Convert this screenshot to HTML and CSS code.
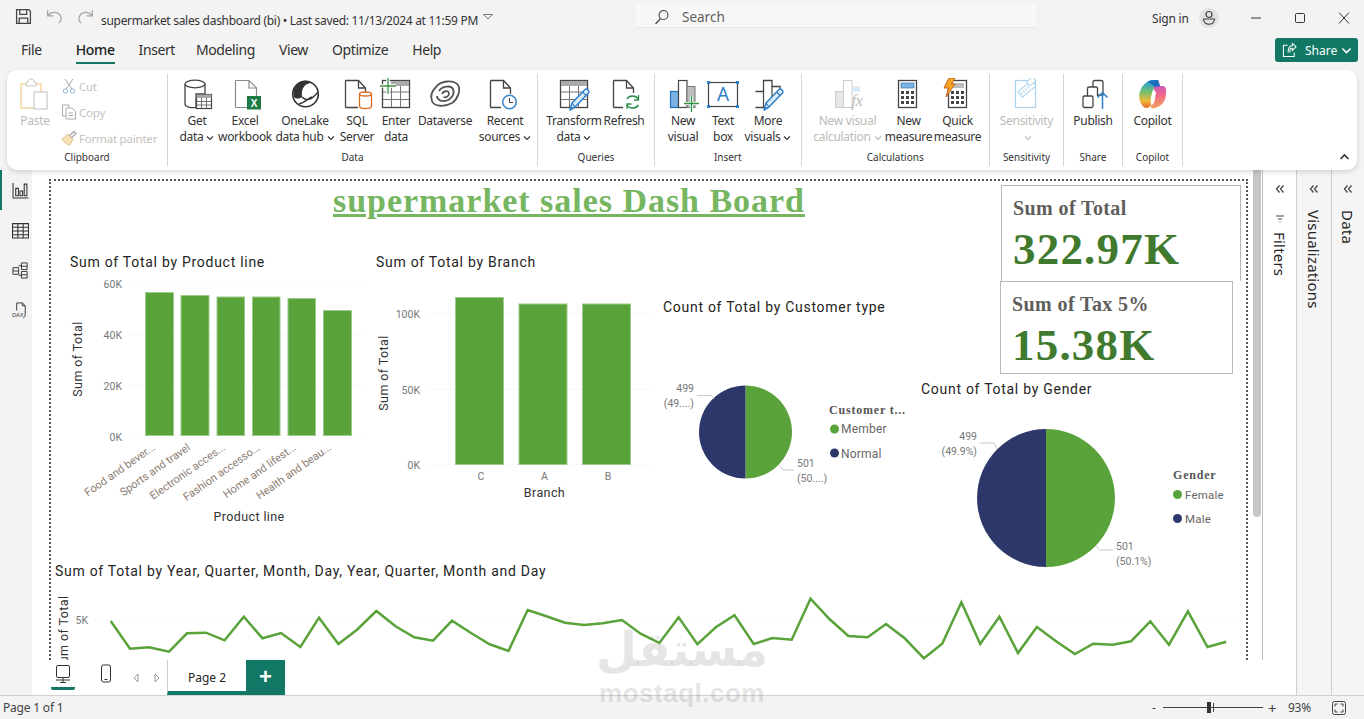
FILE: index.html
```html
<!DOCTYPE html>
<html lang="en">
<head>
    <meta charset="UTF-8">
    <title>supermarket sales dashboard (bi)</title>
    <link rel="stylesheet" href="styles.css">
</head>
<body>
<svg class="sprite" aria-hidden="true">
    <symbol id="chev" viewBox="0 0 8 8"><path d="M1 2.5 4 5.5 7 2.5" fill="none" stroke="currentColor" stroke-width="1.1"/></symbol>
    <symbol id="dbl" viewBox="0 0 10 10"><path d="M4.5 1.5 1.5 5 4.5 8.5M8.5 1.5 5.5 5 8.5 8.5" fill="none" stroke="currentColor" stroke-width="1.3"/></symbol>
    <symbol id="pencil" viewBox="0 0 24 24"><path d="M3 23 5 16 18 2.5C20 1 23 4 21.5 6L8 20Z" fill="#dcebf8" stroke="#2f80c8" stroke-width="1.5" stroke-linejoin="round"/><path d="M15.500 5 19 8.500M5 16 8 20" fill="none" stroke="#2f80c8" stroke-width="1.2"/><path d="M3 23 4 19.500 6.500 21.800Z" fill="#2f80c8"/></symbol>
    <linearGradient id="cp1" x1="0" y1="0" x2="0" y2="1"><stop offset="0" stop-color="#1b9de2"/><stop offset=".45" stop-color="#7cc06a"/><stop offset=".75" stop-color="#f0b93a"/><stop offset="1" stop-color="#e8642c"/></linearGradient>
    <linearGradient id="cp2" x1="0" y1="0" x2="0" y2="1"><stop offset="0" stop-color="#b04fd0"/><stop offset=".5" stop-color="#f0668f"/><stop offset="1" stop-color="#f5a25a"/></linearGradient>
</svg>

<header class="titlebar">
    <svg class="tb-ico" viewBox="0 0 16 16"><path d="M1.500 1.500H13L14.500 3V14.500H1.500ZM4.500 1.500V6H11V1.500M4 14.500V9.500H12V14.500" fill="none" stroke="#444" stroke-width="1.200"/></svg>
    <svg class="tb-ico" viewBox="0 0 16 16"><path d="M1.500 2V7.500H7M2 7C5 3 12 3 14 8.500 14.500 10.500 13.500 13 12 14" fill="none" stroke="#a6a6a6" stroke-width="1.200"/></svg>
    <svg class="tb-ico" viewBox="0 0 16 16"><path d="M14.500 2V7.500H9M14 7C11 3 4 3 2 8.500 1.500 10.500 2.500 13 4 14" fill="none" stroke="#a6a6a6" stroke-width="1.200"/></svg>
    <div class="doc-title">
        <span>supermarket sales dashboard (bi) • Last saved: 11/13/2024 at 11:59 PM</span>
        <svg class="caret" viewBox="0 0 10 6"><path d="M.5.500H9.500L5 5Z" fill="none" stroke="#777"/></svg>
    </div>
    <div class="search">
        <svg viewBox="0 0 16 16" class="search-ico"><circle cx="9.500" cy="6" r="4.500" fill="none" stroke="#444" stroke-width="1.100"/><path d="M6.500 9.500 1.500 15" stroke="#444" stroke-width="1.200"/></svg>
        <span>Search</span>
    </div>
    <div class="signin">Sign in</div>
    <div class="avatar"><svg viewBox="0 0 20 20"><circle cx="10" cy="10" r="10" fill="#e1e1e1"/><circle cx="10" cy="6.500" r="3" fill="none" stroke="#444" stroke-width="1.200"/><path d="M4.500 11H15.500C15.500 18 4.500 18 4.500 11Z" fill="none" stroke="#444" stroke-width="1.200"/></svg></div>
    <div class="winctrl">
        <svg viewBox="0 0 12 12"><path d="M1 6H11" stroke="#333"/></svg>
        <svg viewBox="0 0 12 12"><rect x="1.500" y="1.500" width="9" height="9" rx="1" fill="none" stroke="#333"/></svg>
        <svg viewBox="0 0 12 12"><path d="M1 .5 11 11.500M11 .5 1 11.500" stroke="#333"/></svg>
    </div>
</header>

<nav class="tabs">
    <a class="tab">File</a>
    <a class="tab first active">Home</a>
    <a class="tab short">Insert</a>
    <a class="tab">Modeling</a>
    <a class="tab">View</a>
    <a class="tab">Optimize</a>
    <a class="tab">Help</a>
    <button class="share">
        <svg viewBox="0 0 16 16"><path d="M6 2.500H1.500V14.500H13V10M8.500 10V7.500C8.500 6 10 5.500 11 5.500V8L15 4 11 .5V3C8 3 6.500 5.500 6.500 10" fill="none" stroke="#fff" stroke-width="1.100"/></svg>
        Share
        <svg class="share-chev"><use href="#chev"/></svg>
    </button>
</nav>

<section class="ribbon">
    <div class="rgroup g-clip">
        <div class="clip-row">
            <div class="rbtn off paste">
                <svg viewBox="0 0 34 34"><path d="M10 6H3V30H19" fill="#fff" stroke="#f3d6a4" stroke-width="1.500"/><path d="M16 6H23V14" fill="none" stroke="#f3d6a4" stroke-width="1.500"/><path d="M8 8V4H10C10 0 16 0 16 4H18V8Z" fill="#fff" stroke="#c8c6c4"/><rect x="16" y="14" width="13" height="17" fill="#fff" stroke="#bdbdbd"/></svg>
                <span>Paste</span>
            </div>
            <div class="small-list">
                <div class="sbtn"><svg viewBox="0 0 16 16"><path d="M4 1 11 11M12 1 5 11" stroke="#a9a9a9" fill="none"/><circle cx="4.500" cy="13" r="2.200" fill="none" stroke="#8fb9dc"/><circle cx="11.500" cy="13" r="2.200" fill="none" stroke="#8fb9dc"/></svg>Cut</div>
                <div class="sbtn"><svg viewBox="0 0 16 16"><path d="M8 3.500V1H1.500V12H5" fill="none" stroke="#a9a9a9"/><path d="M5 4H11L14.500 7.500V15H5ZM7.500 9H12M7.500 11.500H12" fill="#fff" stroke="#a9a9a9"/></svg>Copy</div>
                <div class="sbtn"><svg viewBox="0 0 16 16"><path d="M1 9 7 4 12 9 9 15C6 15 3 12 1 9Z" fill="#f6e0b4" stroke="#dcc48f"/><path d="M8 6 13 1.500 15 3.500 10 8" fill="none" stroke="#a9a9a9" stroke-width="1.300"/></svg>Format painter</div>
            </div>
        </div>
        <div class="glabel">Clipboard</div>
    </div>

    <div class="rgroup g-data">
        <div class="row-data">
            <div class="rbtn">
                <svg viewBox="0 0 34 34"><path d="M5 6V26C5 29 11 30 16 29.500V16H25V6" fill="#fff" stroke="#444" stroke-width="1.300"/><ellipse cx="15" cy="6" rx="10" ry="3.800" fill="#fff" stroke="#444" stroke-width="1.300"/><rect x="16.500" y="16.500" width="15" height="14" fill="#fff" stroke="#444" stroke-width="1.200"/><path d="M16.500 16.500H31.500V20H16.500Z" fill="#a6a6a6"/><path d="M21.500 20V30.500M26.500 20V30.500M16.500 23.500H31.500M16.500 27H31.500" stroke="#666" stroke-width=".9"/></svg>
                <span>Get</span><span>data <svg class="chev"><use href="#chev"/></svg></span>
            </div>
            <div class="rbtn">
                <svg viewBox="0 0 34 34"><path d="M7.500 2.500H21L28.500 10V18M19 29.500H7.500Z" fill="#fff" stroke="#8a8a8a" stroke-width="1.200"/><path d="M7.500 2.500V29.500M21 2.500V10H28.500" fill="none" stroke="#8a8a8a" stroke-width="1.200"/><rect x="19" y="18" width="14" height="13.500" fill="#1f7b45"/><text x="26" y="29" class="xl">X</text></svg>
                <span>Excel</span><span>workbook</span>
            </div>
            <div class="rbtn">
                <svg viewBox="0 0 34 34"><circle cx="17.500" cy="16" r="12.800" fill="#fff" stroke="#333" stroke-width="1.600"/><path d="M7 9C11 2 20 1 24 5 17 5 13 10 14 19 11 21 8 21 6 19 5 15 5 12 7 9Z" fill="#333"/><path d="M14 19C18 23 23 23 30 14M11 26C17 25 20 20 24 19" fill="none" stroke="#333" stroke-width="1.300"/></svg>
                <span>OneLake</span><span>data hub <svg class="chev"><use href="#chev"/></svg></span>
            </div>
            <div class="rbtn">
                <svg viewBox="0 0 34 34"><path d="M5.500 2.500H18.500L25.500 10V14M18 29.500H5.500Z" fill="#fff" stroke="#444" stroke-width="1.300"/><path d="M5.500 2.500V29.500M18.500 2.500V10H25.500" fill="none" stroke="#444" stroke-width="1.300"/><path d="M19.500 16V28C19.500 31.500 31.500 31.500 31.500 28V16" fill="#fff" stroke="#dc6d1d" stroke-width="1.300"/><ellipse cx="25.500" cy="16" rx="6" ry="2" fill="#fff" stroke="#dc6d1d" stroke-width="1.300"/></svg>
                <span>SQL</span><span>Server</span>
            </div>
            <div class="rbtn">
                <svg viewBox="0 0 34 34"><rect x="3.500" y="2.500" width="27" height="27" fill="#fff" stroke="#444" stroke-width="1.300"/><rect x="12" y="3" width="18" height="5" fill="#aaa"/><path d="M12.500 8V29M21.500 8V29M4 14H30M4 21.500H30" stroke="#777"/><path d="M9 0V16M1 8H17" stroke="#fff" stroke-width="3.500"/><path d="M9 0V16M1 8H17" stroke="#3f9143" stroke-width="1.300"/></svg>
                <span>Enter</span><span>data</span>
            </div>
            <div class="rbtn">
                <svg viewBox="0 0 34 34"><g fill="none" stroke="#555" stroke-width="1.800"><path d="M8 9C13 2 26 2 30 7 33 12 30 21 24 25 17 29 6 29 4 23 2 18 4 13 8 9Z"/><path d="M11 13C14 8 23 7 25 11 27 15 24 21 19 22.500 14 24 9 22 9 18"/><path d="M14 16C15 13 20 12 21 15 21.500 18 18 20 15.500 19"/></g></svg>
                <span>Dataverse</span>
            </div>
            <div class="rbtn">
                <svg viewBox="0 0 34 34"><path d="M2.500 2.500H15.500L22.500 10V16M13 29.500H2.500Z" fill="#fff" stroke="#444" stroke-width="1.300"/><path d="M2.500 2.500V29.500M15.500 2.500V10H22.500" fill="none" stroke="#444" stroke-width="1.300"/><circle cx="21.500" cy="24" r="6.800" fill="#fff" stroke="#3c87c9" stroke-width="1.500"/><path d="M21.500 20V24.500H25" fill="none" stroke="#444"/></svg>
                <span>Recent</span><span>sources <svg class="chev"><use href="#chev"/></svg></span>
            </div>
        </div>
        <div class="glabel">Data</div>
    </div>

    <div class="rgroup g-queries">
        <div class="row-queries">
            <div class="rbtn">
                <svg viewBox="0 0 34 34"><rect x="3.500" y="2.500" width="27" height="27" fill="#fff" stroke="#444" stroke-width="1.300"/><rect x="4" y="3" width="26" height="5" fill="#aaa"/><path d="M12.500 8V29M21.500 8V29M4 14H30M4 21.500H30" stroke="#777"/><use href="#pencil" x="10" y="9" width="24" height="24"/></svg>
                <span>Transform</span><span>data <svg class="chev"><use href="#chev"/></svg></span>
            </div>
            <div class="rbtn">
                <svg viewBox="0 0 34 34"><path d="M6.500 2.500H19.500L26.500 10V15M16 29.500H6.500Z" fill="#fff" stroke="#444" stroke-width="1.300"/><path d="M6.500 2.500V29.500M19.500 2.500V10H26.500" fill="none" stroke="#444" stroke-width="1.300"/><path d="M20 21C22 17 29 17 31.500 21M31.500 27C29 31 22 31 20 27" fill="none" stroke="#2f8f4e" stroke-width="1.600"/><path d="M31.500 17V22H27M20 31V26H24.500" fill="none" stroke="#2f8f4e" stroke-width="1.300"/></svg>
                <span>Refresh</span>
            </div>
        </div>
        <div class="glabel">Queries</div>
    </div>

    <div class="rgroup g-insert">
        <div class="row-insert">
            <div class="rbtn">
                <svg viewBox="0 0 34 34"><rect x="4.500" y="13.500" width="8" height="16" fill="#7ab3e4" stroke="#2272b9" stroke-width="1.200"/><rect x="12.500" y="2.500" width="8.500" height="27" fill="#fff" stroke="#444" stroke-width="1.200"/><rect x="21" y="8.500" width="8" height="21" fill="#bdbdbd" stroke="#777"/><path d="M25.500 18V34M18 25.500H33" stroke="#fff" stroke-width="3"/><path d="M25.500 18V34M18 25.500H33" stroke="#2d9441" stroke-width="1.300"/></svg>
                <span>New</span><span>visual</span>
            </div>
            <div class="rbtn">
                <svg viewBox="0 0 34 34"><rect x="2.500" y="4.500" width="29" height="24" fill="#fff" stroke="#444" stroke-width="1.200"/><g fill="#2f80c8"><rect x="1" y="3" width="3" height="3"/><rect x="30" y="3" width="3" height="3"/><rect x="1" y="27" width="3" height="3"/><rect x="30" y="27" width="3" height="3"/></g><text x="17" y="23" class="ta">A</text></svg>
                <span>Text</span><span>box</span>
            </div>
            <div class="rbtn">
                <svg viewBox="0 0 34 34"><path d="M4.500 13.500H12.500V2.500H21V8.500H29V18M16 29.500H4.500Z" fill="#fff" stroke="#444" stroke-width="1.300"/><path d="M12.500 13.500V29M21 8.500V20" stroke="#444" stroke-width="1.200"/><use href="#pencil" x="10" y="9" width="24" height="24"/></svg>
                <span>More</span><span>visuals <svg class="chev"><use href="#chev"/></svg></span>
            </div>
        </div>
        <div class="glabel">Insert</div>
    </div>

    <div class="rgroup g-calc">
        <div class="row-calc">
            <div class="rbtn off">
                <svg viewBox="0 0 34 34"><rect x="4.500" y="13.500" width="8" height="16" fill="#e6e6e6" stroke="#ccc"/><rect x="12.500" y="2.500" width="8.500" height="27" fill="#fff" stroke="#ccc"/><rect x="21" y="8.500" width="8" height="5" fill="#d6e6f5"/><text x="26" y="28" class="fx">fx</text></svg>
                <span>New visual</span><span>calculation <svg class="chev"><use href="#chev"/></svg></span>
            </div>
            <div class="rbtn">
                <svg viewBox="0 0 34 34"><rect x="6.500" y="2.500" width="18" height="27" fill="#fff" stroke="#444" stroke-width="1.300"/><rect x="9" y="5" width="13" height="5" fill="#7ab3e4" stroke="#3a78b0" stroke-width=".7"/><g fill="#444"><path d="M9 13h3v3H9zM14 13h3v3h-3zM19 13h3v3h-3zM9 18h3v3H9zM14 18h3v3h-3zM19 18h3v3h-3zM9 23h3v3H9zM14 23h3v3h-3zM19 23h3v3h-3z"/></g></svg>
                <span>New</span><span>measure</span>
            </div>
            <div class="rbtn">
                <svg viewBox="0 0 34 34"><rect x="7.500" y="2.500" width="18" height="27" fill="#fff" stroke="#444" stroke-width="1.300"/><rect x="10" y="5" width="13" height="5" fill="#bbb"/><g fill="#444"><path d="M10 13h3v3h-3zM15 13h3v3h-3zM20 13h3v3h-3zM10 18h3v3h-3zM15 18h3v3h-3zM20 18h3v3h-3zM10 23h3v3h-3zM15 23h3v3h-3zM20 23h3v3h-3z"/></g><path d="M8 0H14L10.500 6H14L5 19 7.500 10H3Z" fill="#f6a623" stroke="#c8601a"/></svg>
                <span>Quick</span><span>measure</span>
            </div>
        </div>
        <div class="glabel">Calculations</div>
    </div>

    <div class="rgroup g-sens">
        <div class="row-single">
            <div class="rbtn off">
                <svg viewBox="0 0 34 34"><rect x="6.500" y="2.500" width="20" height="27" fill="#fff" stroke="#a9d3ee" stroke-width="1.200"/><g fill="#fff" stroke="#a9d3ee" transform="rotate(-40 18 14)"><rect x="11" y="8" width="18" height="7"/><path d="M13 10V13M16 10V13M19 10V13M22 10V13"/><rect x="24" y="6" width="8" height="5"/></g></svg>
                <span>Sensitivity</span><span><svg class="chev"><use href="#chev"/></svg></span>
            </div>
        </div>
        <div class="glabel">Sensitivity</div>
    </div>

    <div class="rgroup g-share">
        <div class="row-single">
            <div class="rbtn">
                <svg viewBox="0 0 34 34"><g fill="#fff" stroke="#444" stroke-width="1.300"><path d="M17 9V4C17 3 18 2.500 19 2.500H25C26 2.500 27 3 27 4V17H17"/><path d="M11.500 18V10.500C11.500 9.500 12 9 13 9H20C21 9 21.500 9.500 21.500 10.500V18"/><rect x="7" y="18" width="10" height="11.500" rx="1.500"/></g><path d="M26.500 31V15M21.500 19.500 26.500 14.500 31.500 19.500" fill="none" stroke="#2f80c8" stroke-width="1.500"/></svg>
                <span>Publish</span>
            </div>
        </div>
        <div class="glabel">Share</div>
    </div>

    <div class="rgroup g-copilot">
        <div class="row-single">
            <div class="rbtn">
                <svg viewBox="0 0 34 34"><path d="M12 4C14 2 20 2 22 2L19 10C16 16 15 22 16 27 14 31 9 31 7 27 2 20 4 9 12 4Z" fill="url(#cp1)"/><path d="M22 2C24 2 24 5 25 8 29 8 32 8 31 15 31 23 27 28 20 30 17 31 15 30 16 27 20 27 20 20 21 14 18 12 18 8 22 2Z" fill="url(#cp2)"/><path d="M13 3.500C15 2 20 2 23 2L25 8 20 9Z" fill="#1d6fc2"/></svg>
                <span>Copilot</span>
            </div>
        </div>
        <div class="glabel">Copilot</div>
    </div>

    <svg class="collapse" viewBox="0 0 10 8"><path d="M1 6 5 2 9 6" fill="none" stroke="#333" stroke-width="1.600"/></svg>
</section>

<main class="workspace">
    <aside class="rail">
        <div class="rail-item active"><svg viewBox="0 0 16 16"><path d="M1 1V15H15.500M3.500 13V6H6V13ZM7.500 13V8.500H10V13ZM11.500 13V2H14V13Z" fill="none" stroke="#333"/></svg></div>
        <div class="rail-item"><svg viewBox="0 0 16 16"><path d="M.5 1.500H15.500V15H.5ZM.5 5H15.500M.5 8.500H15.500M.5 12H15.500M5.500 1.500V15M10.500 1.500V15" fill="none" stroke="#333"/></svg></div>
        <div class="rail-item"><svg viewBox="0 0 18 18"><path d="M1 6H7V13H1ZM1 9.500H7M7 4H10M7 14H10M10 1H16V8H10ZM10 4.500H16M10 10H16V17H10ZM10 13.500H16" fill="none" stroke="#333"/></svg></div>
        <div class="rail-item"><svg viewBox="0 0 18 18"><path d="M5 9V1H11L14 4V13C14 15 13 16.500 12 17M11 1V4H14" fill="none" stroke="#333"/><text x="0" y="16" class="dax">DAX</text></svg></div>
    </aside>

    <div class="center">
        <div class="canvas-row">
            <div class="canvas">
                <div class="report-page">
                    <h1 class="report-title">supermarket sales Dash Board</h1>

                    <div class="visual v-product">
                        <svg viewBox="60 250 310 290">
                            <text x="70" y="267" class="vt">Sum of Total by Product line</text>
                            <g class="grid"><path d="M130 283.500H365M130 334.500H365M130 385.500H365M130 435.500H365"/></g>
                            <g class="ax end"><text x="122" y="288">60K</text><text x="122" y="338.500">40K</text><text x="122" y="389.500">20K</text><text x="122" y="440.500">0K</text></g>
                            <g class="bars">
                                <rect x="145.500" y="292.500" width="28" height="143"/>
                                <rect x="181" y="295.500" width="28" height="140"/>
                                <rect x="217" y="297" width="27.500" height="138.500"/>
                                <rect x="252.500" y="297" width="27.500" height="138.500"/>
                                <rect x="288" y="298.500" width="27.500" height="137"/>
                                <rect x="323.500" y="310.500" width="28" height="125"/>
                            </g>
                            <text transform="translate(82 359) rotate(-90)" class="at mid">Sum of Total</text>
                            <g class="ax end rot">
                                <text transform="translate(156 449) rotate(-35)">Food and bever...</text>
                                <text transform="translate(191 449) rotate(-35)">Sports and travel</text>
                                <text transform="translate(226 449) rotate(-35)">Electronic acces...</text>
                                <text transform="translate(261 449) rotate(-35)">Fashion accesso...</text>
                                <text transform="translate(297 449) rotate(-35)">Home and lifest...</text>
                                <text transform="translate(332 449) rotate(-35)">Health and beau...</text>
                            </g>
                            <text x="249" y="521" class="at mid">Product line</text>
                        </svg>
                    </div>

                    <div class="visual v-branch">
                        <svg viewBox="370 250 280 260">
                            <text x="376" y="267" class="vt">Sum of Total by Branch</text>
                            <g class="grid"><path d="M429 313.500H660M429 389.500H660M429 464.500H660"/></g>
                            <g class="ax end"><text x="420" y="317.500">100K</text><text x="420" y="393.500">50K</text><text x="420" y="469">0K</text></g>
                            <g class="bars">
                                <rect x="455.500" y="297.500" width="48" height="167"/>
                                <rect x="519" y="304" width="48" height="160.500"/>
                                <rect x="582.500" y="304" width="48" height="160.500"/>
                            </g>
                            <text transform="translate(388 373) rotate(-90)" class="at mid">Sum of Total</text>
                            <g class="ax mid"><text x="481" y="480">C</text><text x="544.500" y="480">A</text><text x="608" y="480">B</text></g>
                            <text x="544.500" y="497" class="at mid">Branch</text>
                        </svg>
                    </div>

                    <div class="visual v-customer">
                        <svg viewBox="655 295 265 200">
                            <text x="663" y="312" class="vt">Count of Total by Customer type</text>
                            <path d="M745.500 385.500A46.500 46.500 0 0 1 745.500 478.500Z" class="pie-a"/>
                            <path d="M745.500 385.500A46.500 46.500 0 0 0 745.500 478.500Z" class="pie-b"/>
                            <path d="M697 395.500H711L714 399M779 465 783 470H794" class="leader"/>
                            <g class="ax end"><text x="694" y="392">499</text><text x="694" y="407">(49....)</text></g>
                            <g class="ax"><text x="797" y="467">501</text><text x="797" y="482">(50....)</text></g>
                            <text x="829" y="414" class="lt">Customer t...</text>
                            <circle cx="834.500" cy="429" r="4.500" class="dot-a"/><text x="841" y="433" class="li">Member</text>
                            <circle cx="834.500" cy="453" r="4.500" class="dot-b"/><text x="841" y="458" class="li">Normal</text>
                        </svg>
                    </div>

                    <div class="visual v-gender">
                        <svg viewBox="915 378 325 200">
                            <text x="921" y="394" class="vt">Count of Total by Gender</text>
                            <path d="M1046 429A69 69 0 0 1 1046 567Z" class="pie-a"/>
                            <path d="M1046 429A69 69 0 0 0 1046 567Z" class="pie-b"/>
                            <path d="M980 443H994L997 449M1096 546 1100 550H1113" class="leader"/>
                            <g class="ax end"><text x="977" y="440">499</text><text x="977" y="455">(49.9%)</text></g>
                            <g class="ax"><text x="1116" y="550">501</text><text x="1116" y="565">(50.1%)</text></g>
                            <text x="1173" y="479" class="lt">Gender</text>
                            <circle cx="1177.500" cy="494.500" r="4.500" class="dot-a"/><text x="1185" y="499" class="li small">Female</text>
                            <circle cx="1177.500" cy="518.500" r="4.500" class="dot-b"/><text x="1185" y="523" class="li small">Male</text>
                        </svg>
                    </div>

                    <div class="kpi k-total"><div class="kpi-label">Sum of Total</div><div class="kpi-value">322.97K</div></div>
                    <div class="kpi k-tax"><div class="kpi-label">Sum of Tax 5%</div><div class="kpi-value">15.38K</div></div>

                    <div class="visual v-line">
                        <svg viewBox="53 560 1190 100">
                            <text x="55" y="576" class="vt">Sum of Total by Year, Quarter, Month, Day, Year, Quarter, Month and Day</text>
                            <text transform="translate(68 671) rotate(-90)" class="at">Sum of Total</text>
                            <text x="88" y="624" class="ax end-one">5K</text>
                            <path d="M95 620.500H1238" class="grid-one"/>
                            <polyline class="trend" points="110.700,621 130,648.700 149,647.300 169,651.700 187,633.300 206,632.700 224.600,640.300 243.800,616.700 262.500,638.300 281,633 300.400,647 319,617.700 338.400,644 357,629.700 376.300,611 395.500,626.300 414.300,637.300 433,640.700 452,620.700 471,633 489.700,644.300 508.500,651 527.700,610 546.400,616.300 565,622.700 584,625 602.700,623.300 622,620 640.600,633.700 659.400,643 678.600,617.300 697.400,644.200 715.800,627.300 734.500,615.300 753.700,644 772.500,638 791.700,639.700 810.500,598.700 829.700,619.300 848.400,636 867.600,637.300 886,624 904.700,638.300 923.900,658.300 942.200,643.700 961.400,602.300 980.200,644 999.400,616.700 1018,653 1036.900,627 1055.700,641 1074.900,654 1093.200,643.700 1112.800,644.700 1131,641.300 1150.300,621.300 1169,644.700 1187.900,611.300 1207.500,647 1226.200,641.700"/>
                        </svg>
                    </div>
                </div>
                <div class="scrollbar"></div>
            </div>
            <aside class="pane pane-filters">
                <svg class="pane-chev"><use href="#dbl"/></svg>
                <svg class="funnel" viewBox="0 0 10 10"><path d="M1 2H9M3 5H7M4.500 8H5.500" stroke="#444"/></svg>
                <span class="pane-text">Filters</span>
            </aside>
        </div>
        <div class="pagebar">
            <div class="view-btn active"><svg viewBox="0 0 20 20"><rect x="3.500" y="1.500" width="13" height="12" rx="1.500" fill="none" stroke="#333"/><path d="M3 16H17M7 18.500H13M10 14V18" stroke="#333"/></svg></div>
            <div class="view-btn phone"><svg viewBox="0 0 20 20"><rect x="5.500" y="1" width="9" height="17" rx="2" fill="none" stroke="#333"/><path d="M8.500 15.500H11.500" stroke="#333"/></svg></div>
            <svg class="page-arrow" viewBox="0 0 8 10"><path d="M6 1 2 5 6 9Z" fill="none" stroke="#999"/></svg>
            <svg class="page-arrow" viewBox="0 0 8 10"><path d="M2 1 6 5 2 9Z" fill="none" stroke="#999"/></svg>
            <div class="page-tab">Page 2</div>
            <div class="page-add">+</div>
        </div>
    </div>

    <aside class="pane pane-viz">
        <svg class="pane-chev"><use href="#dbl"/></svg>
        <span class="pane-text">Visualizations</span>
    </aside>
    <aside class="pane pane-data">
        <svg class="pane-chev"><use href="#dbl"/></svg>
        <span class="pane-text">Data</span>
    </aside>
</main>

<footer class="status">
    <span>Page 1 of 1</span>
    <div class="zoom">
        <span class="z-sign">-</span>
        <div class="z-track"><div class="z-mid"></div><div class="z-thumb"></div></div>
        <span class="z-sign plus">+</span>
        <span class="z-val">93%</span>
        <svg class="z-fit" viewBox="0 0 14 14"><rect x=".5" y=".5" width="13" height="13" rx="2" fill="none" stroke="#444"/><path d="M3 5.500V3H5.500M8.500 3H11V5.500M11 8.500V11H8.500M5.500 11H3V8.500" fill="none" stroke="#444"/></svg>
    </div>
</footer>

<div class="watermark">
    <div class="wm-ar">مستقل</div>
    <div class="wm-en">mostaql.com</div>
</div>
</body>
</html>
```

FILE: styles.css
```css
* { box-sizing: border-box; }
html, body { margin: 0; padding: 0; }
body { width: 1364px; height: 719px; overflow: hidden; position: relative; background: #f3f3f3; color: #252423; font-family: "Noto Sans", "Open Sans", sans-serif; font-size: 12px; }
svg { display: block; }
.sprite { position: absolute; width: 0; height: 0; }

/* title bar */
.titlebar { height: 36px; display: flex; align-items: center; padding-left: 15px; }
.titlebar > * { flex: none; }
.tb-ico { width: 17px; height: 17px; margin-right: 14px; margin-top: -3px; }
.doc-title { width: 535px; margin-left: -7px; padding-top: 4px; display: flex; gap: 5px; white-space: pre; color: #333; font-size: 12px; letter-spacing: -.3px; }
.caret { width: 10px; height: 6px; margin-top: 2px; }
.search { width: 400px; height: 23px; margin-top: -3px; padding-top: 1px; background: #f8f8f8; border-bottom: 1px solid #e6e6e6; display: flex; align-items: center; padding-left: 18px; gap: 12px; font-size: 13.5px; color: #605e5c; }
.search-ico { width: 16px; height: 16px; }
.signin { margin-left: 116px; width: 37px; font-size: 12px; color: #333; white-space: nowrap; letter-spacing: -.2px; }
.avatar { margin-left: 10px; width: 20px; height: 20px; }
.winctrl { margin-left: 15px; display: flex; width: 132px; }
.winctrl svg { width: 12px; height: 12px; margin: 0 16px; }

/* tabs */
.tabs { height: 34px; display: flex; padding-left: 21px; position: relative; }
.tab { height: 28px; line-height: 28px; font-size: 14px; margin-right: 24px; color: #323130; letter-spacing: -.4px; }
.tab.first { margin-left: 10px; }
.tab.short { margin-right: 21px; }
.tab.active { border-bottom: 2px solid #117865; font-weight: 500; color: #201f1e; }
.share { position: absolute; left: 1275px; top: 2px; width: 83px; height: 24px; border: 0; border-radius: 3px; background: #117865; color: white; font: 12px "Noto Sans", sans-serif; display: flex; align-items: center; padding: 0 0 0 7px; gap: 8px; }
.share svg { width: 15px; height: 15px; }
.share .share-chev { width: 11px; height: 11px; margin-left: -4px; }

/* ribbon */
.ribbon { position: relative; z-index: 2; height: 100px; margin: 0 7px; background: white; border-radius: 10px; box-shadow: 0 2px 5px rgba(0,0,0,.14); display: flex; padding-top: 4px; }
.rgroup { height: 92px; border-right: 1px solid #d4d4d4; display: flex; flex-direction: column; flex: none; }
.glabel { margin-top: auto; height: 15px; line-height: 12px; font-size: 10px; text-align: center; color: #333; }
.rbtn { display: flex; flex-direction: column; align-items: center; line-height: 16px; font-size: 12px; letter-spacing: -.3px; white-space: nowrap; color: #333; }
.rbtn > svg { width: 34px; height: 34px; flex: none; margin: 4px 0 1px; }
.rbtn span { display: flex; align-items: center; height: 16px; }
.chev { width: 8px; height: 8px; margin-left: 3px; margin-top: 1px; }
.off, .off .chev { color: #bdbab7; }

.g-clip { width: 161px; }
.clip-row { display: flex; }
.paste { width: 56px; }
.small-list { margin-top: -1px; }
.sbtn { height: 26px; display: flex; align-items: center; gap: 2px; color: #c4c2c0; letter-spacing: -.2px; white-space: nowrap; font-size: 11.5px; margin-left: -2px; }
.sbtn svg { width: 16px; height: 16px; }

.g-data { width: 370px; }
.row-data { display: grid; grid-template-columns: 52px 44px 76px 28px 50px 48px 72px; padding-left: 3px; }
.g-queries { width: 117px; }
.row-queries { display: grid; grid-template-columns: 60px 40px; padding-left: 6px; }
.g-insert { width: 146.500px; }
.row-insert { display: grid; grid-template-columns: 46px 34px 56px; padding-left: 5px; }
.g-calc { width: 188.500px; }
.row-calc { display: grid; grid-template-columns: 82px 40px 58px; padding-left: 5px; }
.g-sens { width: 74px; }
.g-share { width: 59px; }
.g-copilot { width: 60px; }
.row-single { display: flex; justify-content: center; }
.collapse { position: absolute; right: 7px; top: 83px; width: 11px; height: 8px; }
.xl { font: bold 10px "Liberation Sans", sans-serif; fill: white; text-anchor: middle; }
.ta { font: 19px "Noto Sans", sans-serif; fill: #2f80c8; text-anchor: middle; }
.fx { font: italic 17px "Liberation Serif", serif; fill: #bdbdbd; text-anchor: middle; }
.dax { font: 6px "Liberation Sans", sans-serif; fill: #333; }

/* workspace */
.workspace { height: 525px; display: flex; background: white; }
.rail { width: 32px; flex: none; background: #f3f3f3; }
.rail-item { height: 40px; display: flex; align-items: center; justify-content: center; padding-left: 8px; }
.rail-item.active { border-left: 2px solid #117865; padding-left: 6px; }
.rail-item svg { width: 17px; height: 17px; }
.center { width: 1264px; flex: none; display: flex; flex-direction: column; }
.canvas-row { height: 490px; display: flex; }
.canvas { width: 1231px; position: relative; border-right: 1px solid #bdbdbd; overflow: hidden; padding: 9px 14px 0 17px; }
.report-page { position: relative; height: 481px; width: 1199px; border: 2px dotted #555; border-bottom: 0; overflow: hidden; background: white; }
.scrollbar { position: absolute; left: 1221px; top: -8px; width: 8px; height: 355px; background: #c8c6c4; border-radius: 4px; }

.report-title { position: absolute; left: 282px; top: 1px; margin: 0; font: bold 34px/38px "Liberation Serif", serif; letter-spacing: .97px; color: #76b661; text-decoration: underline; white-space: nowrap; }

.visual { position: absolute; }
.visual svg { width: 100%; height: 100%; overflow: hidden; }
.v-product { left: 9px; top: 69px; width: 310px; height: 290px; }
.v-branch { left: 319px; top: 69px; width: 280px; height: 260px; }
.v-customer { left: 604px; top: 114px; width: 265px; height: 200px; }
.v-gender { left: 864px; top: 197px; width: 325px; height: 200px; }
.v-line { left: 2px; top: 379px; width: 1190px; height: 100px; }

.vt { font: 14px "Roboto", sans-serif; letter-spacing: .72px; fill: #252423; }
.at { font: 12.500px "Roboto", sans-serif; letter-spacing: .4px; fill: #333; }
.ax { font: 10.500px "Roboto", sans-serif; fill: #777; }
.ax text { font: 10.500px "Roboto", sans-serif; fill: #777; }
.rot text { fill: #8a7a70; font-size: 11px; }
.end, .end-one { text-anchor: end; }
.mid { text-anchor: middle; }
.grid path, .grid-one { stroke: #e8e8e8; stroke-width: 1; stroke-dasharray: 1 3; fill: none; }
.bars rect { fill: #5aa23a; stroke: #9ccb8b; stroke-width: 1; }
.pie-a, .dot-a { fill: #5aa23a; }
.pie-b, .dot-b { fill: #2d3769; }
.leader { fill: none; stroke: #c8c8c8; stroke-width: 1; }
.lt { font: bold 12px "Liberation Serif", serif; fill: #555; letter-spacing: .8px; }
.li { font: 12px "Roboto", sans-serif; fill: #666; letter-spacing: .2px; }
.li.small { font-size: 11.500px; }
.trend { fill: none; stroke: #5aa23a; stroke-width: 2.500; stroke-linejoin: miter; }

.kpi { position: absolute; background: white; border: 1.500px solid #b9b9b9; padding: 9px 11px; }
.k-total { left: 950px; top: 4px; width: 240px; height: 96px; border-bottom: 0; }
.k-tax { left: 949px; top: 100px; width: 233px; height: 93px; }
.kpi-label { font: bold 20px/26px "Liberation Serif", serif; letter-spacing: .4px; color: #605e5c; }
.kpi-value { font: bold 45px/50px "Liberation Serif", serif; color: #3f7a2e; margin-top: 3px; letter-spacing: 1.2px; }

/* right panes */
.pane { display: flex; flex-direction: column; align-items: center; padding-top: 14px; flex: none; }
.pane-filters { width: 33px; background: white; }
.pane-viz { width: 35px; border-left: 1px solid #cfcfcf; background: #f5f5f5; }
.pane-data { width: 33px; border-left: 1px solid #cfcfcf; background: #f5f5f5; }
.pane-chev { width: 10px; height: 10px; color: #444; }
.pane-text { writing-mode: vertical-rl; font-size: 15px; letter-spacing: .2px; color: #252423; margin-top: 16px; }
.funnel { width: 10px; height: 10px; margin-top: 20px; }
.pane-filters .pane-text { margin-top: 8px; }

/* page tabs and status */
.pagebar { height: 35px; display: flex; background: white; padding-left: 19px; align-items: stretch; }
.view-btn { width: 24px; display: flex; justify-content: center; padding-top: 4px; margin-right: 19px; }
.view-btn svg { width: 20px; height: 20px; }
.view-btn.active { border-bottom: 3px solid #117865; border-radius: 0 0 2px 2px; height: 30px; }
.view-btn.phone { margin-right: 14px; }
.page-arrow { width: 8px; height: 10px; margin: 13px 13px 0 0; }
.page-arrow + .page-arrow { margin-right: 6px; }
.page-tab { width: 79px; border-left: 1px solid #cfcfcf; border-bottom: 4px solid #117865; text-align: center; line-height: 36px; font-size: 12px; color: #252423; }
.page-add { width: 39px; background: #117865; color: white; text-align: center; font: bold 22px/33px "Liberation Sans", sans-serif; }

.status { height: 24px; border-top: 1px solid #d0d0d0; background: #f3f3f3; display: flex; align-items: center; padding-left: 3px; position: relative; font-size: 12px; color: #444; letter-spacing: -.2px; }
.zoom { margin-left: auto; display: flex; align-items: center; }
.z-sign { width: 8px; color: #444; margin-right: 3px; }
.z-sign.plus { font-size: 15px; margin-left: 5px; margin-right: 0; width: 12px; }
.z-track { position: relative; width: 100px; height: 1px; background: #444; }
.z-mid { position: absolute; left: 50px; top: -4px; width: 1px; height: 9px; background: #444; }
.z-thumb { position: absolute; left: 44px; top: -5px; width: 4px; height: 11px; background: #333; }
.z-val { margin-left: 8px; font-size: 12px; }
.z-fit { width: 14px; height: 14px; margin: 0 18px 0 21px; }

.watermark { position: absolute; left: 590px; top: 620px; width: 184px; text-align: center; color: rgba(120,120,120,.2); pointer-events: none; }
.wm-ar { font: bold 47px/60px "DejaVu Sans", sans-serif; }
.wm-en { font: bold 26px/26px "Liberation Sans", sans-serif; letter-spacing: .5px; }
```
